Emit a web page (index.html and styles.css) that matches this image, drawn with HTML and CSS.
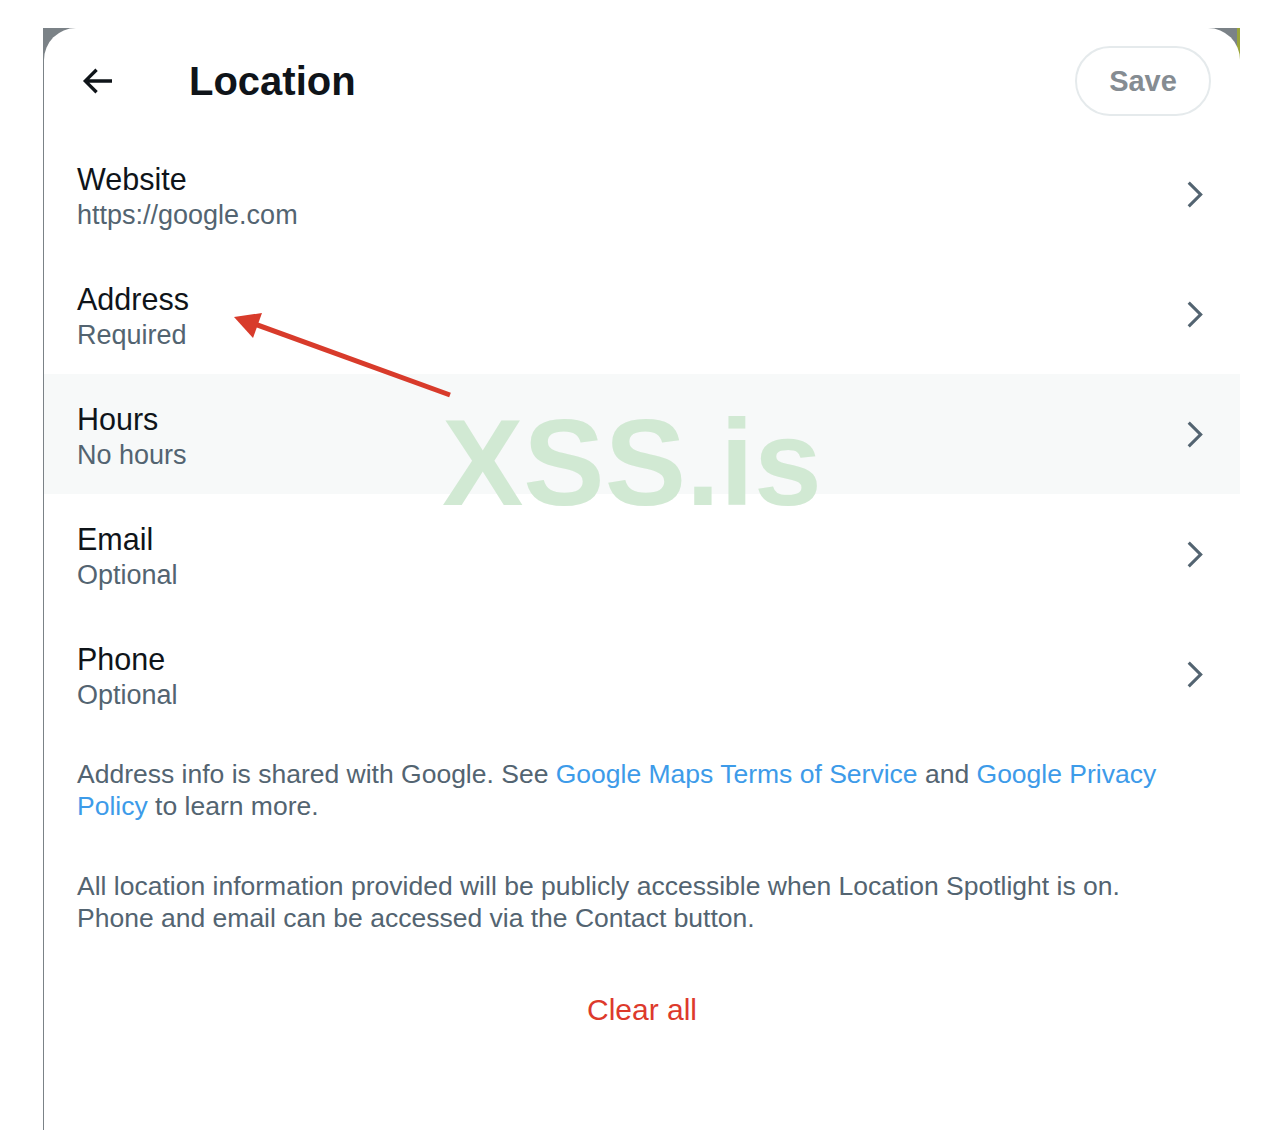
FILE: index.html
```html
<!DOCTYPE html>
<html lang="en">
<head>
    <meta charset="UTF-8">
    <meta name="viewport" content="width=device-width, initial-scale=1.0">
    <title>Location</title>
    <link rel="stylesheet" href="styles.css">
</head>
<body>
    <div class="backdrop">
        <div class="modal">
            <div class="modal-header">
                <button class="back-btn" aria-label="Back">
                    <svg viewBox="0 0 24 24"><path d="M7.414 13l5.043 5.04-1.414 1.42L3.586 12l7.457-7.46 1.414 1.42L7.414 11H21v2H7.414z"></path></svg>
                </button>
                <h2 class="modal-title">Location</h2>
                <button class="save-btn" disabled>Save</button>
            </div>

            <div class="field-list">
                <div class="field-row">
                    <div class="field-text">
                        <div class="field-label">Website</div>
                        <div class="field-value">https://google.com</div>
                    </div>
                    <svg class="chevron" viewBox="0 0 24 24"><path d="M14.586 12L7.543 4.96l1.414-1.42L17.414 12l-8.457 8.46-1.414-1.42L14.586 12z"></path></svg>
                </div>
                <div class="field-row">
                    <div class="field-text">
                        <div class="field-label">Address</div>
                        <div class="field-value">Required</div>
                    </div>
                    <svg class="chevron" viewBox="0 0 24 24"><path d="M14.586 12L7.543 4.96l1.414-1.42L17.414 12l-8.457 8.46-1.414-1.42L14.586 12z"></path></svg>
                </div>
                <div class="field-row hovered">
                    <div class="field-text">
                        <div class="field-label">Hours</div>
                        <div class="field-value">No hours</div>
                    </div>
                    <svg class="chevron" viewBox="0 0 24 24"><path d="M14.586 12L7.543 4.96l1.414-1.42L17.414 12l-8.457 8.46-1.414-1.42L14.586 12z"></path></svg>
                </div>
                <div class="field-row">
                    <div class="field-text">
                        <div class="field-label">Email</div>
                        <div class="field-value">Optional</div>
                    </div>
                    <svg class="chevron" viewBox="0 0 24 24"><path d="M14.586 12L7.543 4.96l1.414-1.42L17.414 12l-8.457 8.46-1.414-1.42L14.586 12z"></path></svg>
                </div>
                <div class="field-row">
                    <div class="field-text">
                        <div class="field-label">Phone</div>
                        <div class="field-value">Optional</div>
                    </div>
                    <svg class="chevron" viewBox="0 0 24 24"><path d="M14.586 12L7.543 4.96l1.414-1.42L17.414 12l-8.457 8.46-1.414-1.42L14.586 12z"></path></svg>
                </div>
            </div>

            <p class="note">Address info is shared with Google. See <a href="#">Google Maps Terms of Service</a> and <a href="#">Google Privacy Policy</a> to learn more.</p>
            <p class="note">All location information provided will be publicly accessible when Location Spotlight is on. Phone and email can be accessed via the Contact button.</p>

            <div class="clear-wrap">
                <button class="clear-btn">Clear all</button>
            </div>
        </div>
    </div>

    <div class="watermark">XSS.is</div>

    <!-- red annotation arrow pointing at Address -->
    <svg class="annotation" viewBox="0 0 1264 1130">
        <line x1="450" y1="395" x2="252" y2="323"></line>
        <polygon points="234,317 262,313 253,338"></polygon>
    </svg>
</body>
</html>
```

FILE: styles.css
```css
body {
    margin: 0;
    background-color: #fff;
    font-family: "Liberation Sans", Arial, sans-serif;
    color: #0f1419;
}

.backdrop {
    margin: 28px 24px 0 43px;
    padding-left: 1px;
    min-height: 1102px;
    background: linear-gradient(to left, #9aa53a 0 3px, #7b8287 3px);
}

.modal {
    background-color: #fff;
    border-radius: 32px 32px 0 0;
    min-height: 1102px;
}

.modal-header {
    display: flex;
    align-items: center;
    height: 106px;
    padding: 0 29px 0 33px;
}

.back-btn {
    background: none;
    border: none;
    padding: 0;
    width: 40px;
    height: 40px;
    cursor: pointer;
}
.back-btn svg {
    width: 40px;
    height: 40px;
    fill: #0f1419;
    display: block;
}

.modal-title {
    margin: 0 0 0 72px;
    font-size: 40px;
    font-weight: bold;
    flex: 1;
}

.save-btn {
    width: 136px;
    height: 70px;
    border: 2px solid #e5eaec;
    border-radius: 35px;
    background: #fff;
    color: #858c92;
    font-family: inherit;
    font-size: 29px;
    font-weight: bold;
}

.field-row {
    display: flex;
    align-items: center;
    height: 120px;
    box-sizing: border-box;
    padding: 0 27px 0 33px;
}
.field-row.hovered {
    background-color: #f7f9f9;
}

.field-text {
    flex: 1;
    padding-top: 5px;
}
.field-label {
    font-size: 30.5px;
    line-height: 36px;
    color: #0f1419;
}
.field-value {
    font-size: 27px;
    line-height: 36px;
    color: #536471;
}

.chevron {
    width: 37px;
    height: 37px;
    fill: #536471;
}

.note {
    margin: 24px 0 0;
    padding: 0 64px 0 33px;
    font-size: 26.5px;
    line-height: 32px;
    color: #536471;
}
.note + .note {
    margin-top: 48px;
}
.note a {
    color: #3d9be9;
    text-decoration: none;
}

.clear-wrap {
    text-align: center;
    margin-top: 58px;
}
.clear-btn {
    background: none;
    border: none;
    padding: 0;
    font-family: inherit;
    font-size: 30px;
    line-height: 36px;
    color: #dd3a2c;
    cursor: pointer;
}

.watermark {
    position: absolute;
    left: 442px;
    top: 402px;
    font-size: 122px;
    line-height: 1;
    font-weight: bold;
    color: #d1e9d3;
    pointer-events: none;
}

.annotation {
    position: absolute;
    left: 0;
    top: 0;
    width: 1264px;
    height: 1130px;
    pointer-events: none;
}
.annotation line {
    stroke: #d83b2b;
    stroke-width: 5;
}
.annotation polygon {
    fill: #d83b2b;
}
```
